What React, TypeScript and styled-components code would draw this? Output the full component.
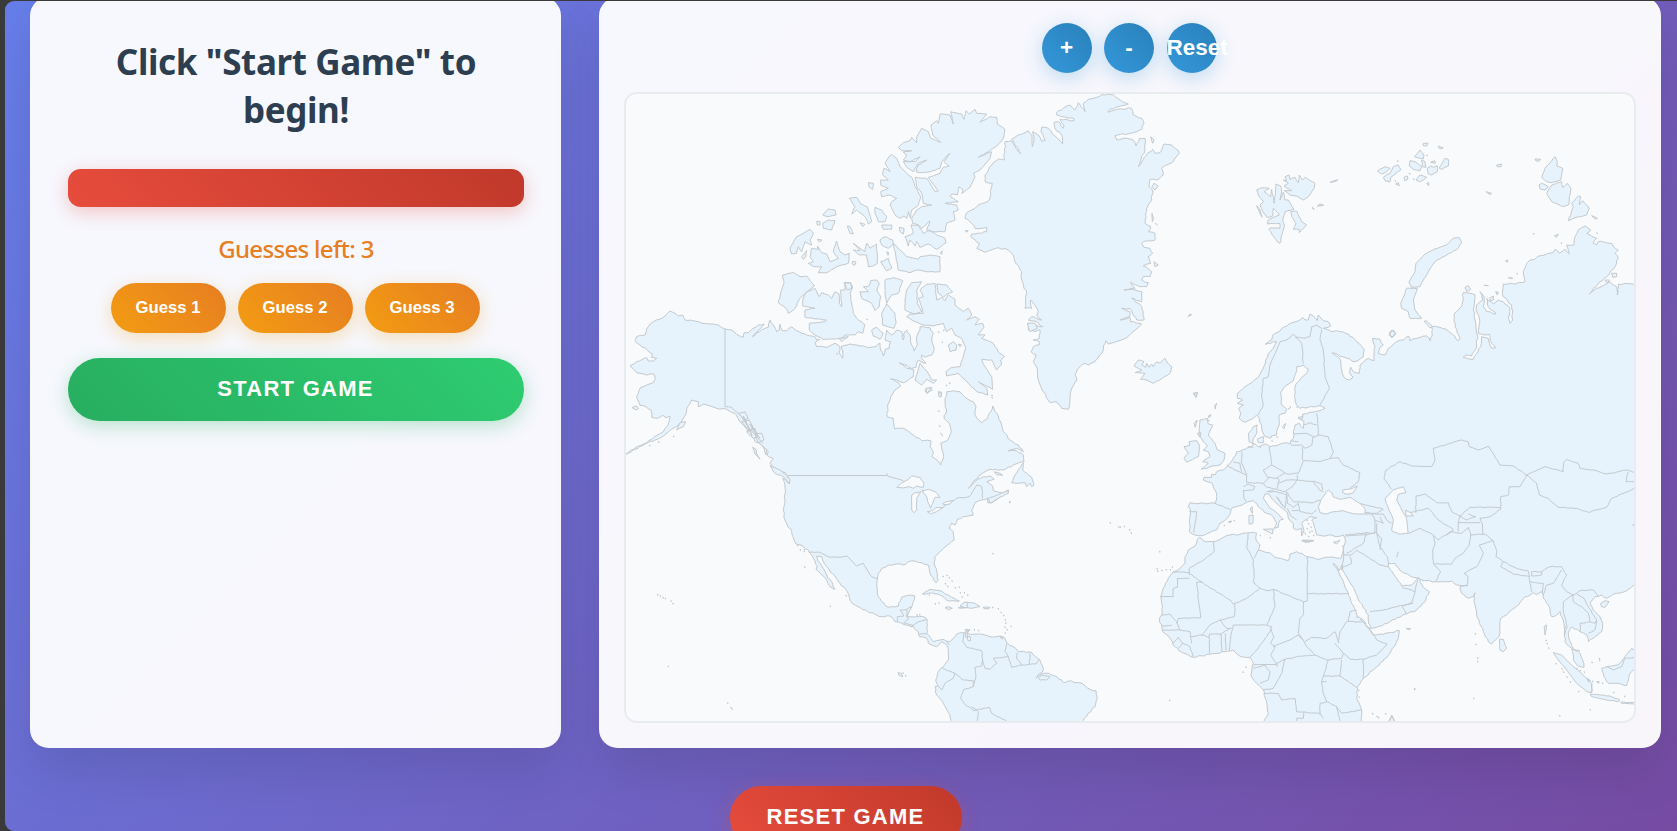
import React from "react";
import styled, { createGlobalStyle } from "styled-components";

const GlobalStyle = createGlobalStyle`
  * { box-sizing: border-box; }
  html, body { margin: 0; padding: 0; height: 100%; overflow: hidden; background: #3a3a3a; }
`;

/* ---------- map data ---------- */

// Survey sheets: each has its own origin and is plotted at three units per pixel.
type Sheet = [number, number];
const canada: Sheet = [620, 280];
const arctic: Sheet = [760, 90];
const carib: Sheet = [760, 460];
const europe: Sheet = [1120, 290];
const siberia: Sheet = [1360, 90];
const africa: Sheet = [1150, 500];
const asia: Sheet = [1380, 420];
const svalbard: Sheet = [1240, 160];

const plot = ([ox, oy]: Sheet, points: string): [number, number][] =>
  points
    .trim()
    .split(/\s+/)
    .map((p) => {
      const [x, y] = p.split(",").map(Number);
      return [ox + x / 3, oy + y / 3];
    });

const roughen = (pts: [number, number][], closed: boolean, amount: number) => {
  const out: [number, number][] = [];
  const last = closed ? pts.length : pts.length - 1;
  for (let i = 0; i < last; i++) {
    const [ax, ay] = pts[i];
    const [bx, by] = pts[(i + 1) % pts.length];
    const len = Math.hypot(bx - ax, by - ay);
    out.push([ax, ay]);
    const n = len > 60 ? 0 : Math.floor(len / 2.6);
    for (let k = 1; k < n; k++) {
      const t = k / n;
      const seed = Math.sin(ax * 12.9 + ay * 78.2 + k * 37.7) * 43758.5;
      const j = (seed - Math.floor(seed) - 0.5) * amount;
      out.push([ax + (bx - ax) * t - ((by - ay) / len) * j, ay + (by - ay) * t + ((bx - ax) / len) * j]);
    }
  }
  if (!closed) out.push(pts[pts.length - 1]);
  return out;
};

const toPath = (pts: [number, number][], closed: boolean, amount: number) =>
  "M" + roughen(pts, closed, amount).map(([x, y]) => `${x.toFixed(1)} ${y.toFixed(1)}`).join("L") + (closed ? "Z" : "");

const ring = (...parts: [Sheet, string][]) =>
  toPath(parts.flatMap(([s, p]) => plot(s, p)), true, 1.5);

const shapes = (s: Sheet, list: string) =>
  list.trim().split("|").map((p) => toPath(plot(s, p), true, 0.7)).join("");

const lines = (s: Sheet, list: string) =>
  list.trim().split("|").map((p) => toPath(plot(s, p), false, 0.8)).join("");

const specks = (s: Sheet, list: string) =>
  plot(s, list).map(([x, y]) => `M${x.toFixed(1)} ${y.toFixed(1)}l1 .5l-.6 .5Z`).join("");

const americas = ring(
  [canada, `18,523 48,502 70,492 95,478 112,465 130,455 143,437 150,408 138,413 128,406 112,415 95,412 93,390 78,380 60,376 50,350 62,322 80,315 100,308 106,295 102,282 80,285 50,278 30,257 50,245 80,233 85,243 100,243 110,235 95,232 97,222 80,208 60,195 45,182 50,170 75,165 85,140 100,125 118,118 135,108 150,93 165,100 175,108 188,105 195,120 220,122 245,130 270,132 295,135 315,147 335,150 350,163 370,172 372,158 385,158 395,148 415,135 433,132 420,147 400,165 398,170 425,150 445,142 450,120 460,135 470,155 478,150 480,133 487,152 500,152 515,140 530,152 560,165 585,170 590,180 600,178 585,188 590,200 620,202 645,190 655,195 660,210 657,216 668,235 668,212 663,200 690,192 720,198 745,203 768,200 780,190 782,210 790,228 795,208 808,205 812,185 795,180 800,150 815,165 830,150 845,155 850,180 855,155 860,150 870,165 875,195 882,213 892,195 890,170 900,150 900,140 930,143 940,160 935,175 943,205 935,225 915,232 905,225 905,235 918,250 895,240 888,262 875,265 838,248 860,265 882,270 880,290 865,300 850,308 830,300 812,297 835,308 842,318 825,330 812,350 803,375 802,410 820,415 824,447 850,445 880,465 905,482 932,482 930,500 940,515 935,530 950,540 962,555 968,540 970,520 962,490 985,478 994,455 988,430 972,415 980,390 975,365 980,335 1000,332 1020,335 1035,352 1060,365 1068,380 1065,405 1085,428 1100,418 1112,395 1118,378 1130,400 1145,435 1150,455 1170,480 1195,495 1210,515 1190,505 1165,513 1190,512 1210,525 1212,545 1180,555 1150,570 1110,568 1090,578 1065,600 1045,625 1065,605 1090,590 1110,588 1122,598 1100,605 1118,618 1120,632 1150,640 1165,630 1165,638 1140,650 1115,668 1103,668 1103,655 1085,660 1065,668 1055,690 1060,705 1030,710 1012,718 1005,735`],
  [carib, `575,190 568,205 580,215 583,240 570,250 545,270 525,290 522,310 530,335 535,360 528,368 512,345 505,315 485,308 465,303 445,305 430,315 410,312 385,315 365,325 355,340 350,370 352,400 365,425 385,442 415,438 425,412 450,405 465,408 458,430 450,450 442,470 470,470 495,472 502,480 500,520 520,545 550,538 570,545 575,540 590,522 610,518 628,510 622,520 640,523 655,522 690,530 720,528 735,535 740,548 760,560 775,575 815,577 840,600 850,630 828,655 845,642 865,640 875,645 905,660 910,668 925,663 960,668 990,688 1008,692 1012,715 1005,740 985,760 970,782 970,800 578,790 570,765 550,730 530,705 525,680 535,678 527,660 535,635 550,620 565,600 565,565 560,555 545,545 530,560 505,550 500,535 478,530 475,515 460,500 430,493 405,485 390,468 365,470 330,458 295,440 272,425 262,395 240,370 225,348 210,335 190,305 185,290 170,288 175,305 190,325 200,345 215,365 225,388 210,380 200,360 180,340 168,328 172,318 160,295 145,270 130,260 108,252 95,215 75,180 70,150 75,120 75,85 68,55 88,70`],
  [canada, `505,587 495,578 470,570 450,550 460,535 440,525 445,515 425,495 405,485 400,470 385,455 365,430 345,400 320,388 290,385 270,378 250,372 235,380 235,365 215,360 200,385 198,402 180,430 160,445 130,468 105,480 75,492`]
);

const eurasiaAfrica = ring(
  [europe, `625,95 610,92 595,75 592,92 580,78 570,72 565,90 555,90 548,82 535,92 515,98 500,108 490,112 478,125 458,135 455,150 435,163 470,155 460,175 445,190 437,210 430,235 415,262 395,278 375,290 352,310 352,325 368,330 352,340 370,345 356,355 362,370 358,385 375,397 395,388 410,375 418,385 425,415 435,440 452,445 455,437 470,435 473,415 478,395 478,375 495,370 500,358 485,345 482,315 487,300 500,285 520,272 527,250 530,230 550,225 565,238 562,248 545,262 525,290 525,325 530,345 540,355 600,347 615,355 600,362 570,367 548,372 548,382 535,385 552,395 550,415 538,400 525,405 520,425 520,445 510,462 500,458 475,465 450,470 435,462 415,470 405,462 388,455 385,430 400,410 412,405 410,430 400,445 400,462 395,470 375,478 350,485 340,505 325,525 310,540 290,545 285,555 275,552 275,562 252,562 250,570 275,578 285,600 290,620 285,640 240,640 210,638 205,650 212,665 208,695 208,725 225,735 245,737 290,720 300,700 325,680 335,655 350,650 375,640 400,632 415,650 440,670 460,680 470,700 462,715 475,712 480,690 490,688 470,668 450,655 430,625 435,612 447,612 455,625 480,650 500,665 508,690 520,700 520,715 530,720 545,715 545,738 552,722 545,700 555,690 570,680 590,683 575,690 585,715 590,735 610,738 635,735 650,740 670,735 675,745`],
  [africa, `585,115 583,135 578,160 572,175 535,172 500,178 470,170 440,155 420,162 415,182 400,178 375,172 360,158 335,152 325,150 330,135 318,120 320,100 300,98 270,103 240,105 215,115 190,125 160,122 148,112 135,138 115,150 105,170 105,190 85,210 70,215 55,235 40,265 32,290 38,320 35,345 28,360 35,375 38,395 60,415 70,435 100,460 130,472 180,463 225,455 250,450 272,470 300,472 310,490 303,525 320,550 340,570 350,610 355,640 342,663 342,680 635,680 635,630 622,600 622,560 640,535 680,500 720,460 745,415 748,392 700,403 670,405 655,385 640,360 620,345 605,310 590,270 575,235 550,190 560,198 567,212 575,195 578,210 605,255 625,300 655,345 660,385 680,382 720,365 765,343 800,330 825,305 838,275 820,262 805,232 785,255 755,258 740,235 720,208 715,190 735,190 755,215 790,232`],
  [asia, `115,475 125,480 165,485 215,483 230,495 262,497 240,500 245,520 265,535 280,530 285,518 282,545 290,585 310,635 325,665 335,672 352,655 360,640 362,595 385,580 420,548 435,530 450,525 460,518 470,524 485,515 490,535 505,555 515,590 530,585 540,575 552,610 555,640 555,665 575,685 580,720 595,738 612,742 608,720 600,700 580,685 568,660 565,640 575,620 600,635 620,645 625,665 640,655 665,635 668,610 660,590 640,570 630,550 645,530 665,525 680,535 710,520 740,512 762,495 790,490`],
  [siberia, `850,580 820,583 795,580 775,583 772,615 770,590 750,575 710,595 688,612 700,595 740,560 765,530 775,505 765,490 775,480 765,475 755,460 715,455 710,465 700,460 710,445 690,435 680,430 692,420 675,408 655,420 645,440 642,465 620,465 628,492 615,478 598,490 585,478 580,488 560,492 530,502 500,520 490,545 495,575 470,580 430,582 428,600 430,620 455,645 458,690 450,700 445,685 450,655 430,635 415,630 400,642 380,625 385,650 408,672 380,665 370,650 372,620 360,605 368,630 350,645 348,660 358,685 355,730 375,735 388,733 395,760 408,773 395,775 385,745 365,740 362,770 340,808 310,802 315,796 335,798 350,770 352,735 345,690 340,660 345,615 310,608 305,650 283,670 285,710 300,745 295,752 265,722 240,712 215,710 217,735 210,752 200,738 170,745 150,753 145,738 130,750 110,755 85,775 75,795 55,790 60,772 70,765 60,748 38,745 45,770 42,812 25,805 0,825`],
  [europe, `718,250 700,245 692,232 690,252 700,262 688,270 672,262 665,240 662,210 636,188 680,205 705,215 730,200 733,180 710,155 685,132 650,122 635,125 610,115 625,112 632,108`]
);

const greenland = ring([arctic, `735,155 755,152 768,175 782,192 775,175 755,148 775,135 805,122 815,135 817,170 822,150 818,125 835,135 845,153 856,152 843,125 845,112 865,115 885,138 908,162 905,135 885,115 882,97 895,95 910,115 912,105 900,87 942,92 942,86 905,80 890,75 890,68 910,55 930,45 945,60 955,38 975,65 970,40 985,28 1010,22 1025,14 1060,14 1080,30 1105,42 1075,50 1045,62 1045,67 1085,57 1115,55 1120,75 1145,85 1152,100 1145,118 1120,128 1065,137 1070,150 1100,145 1120,150 1128,168 1138,145 1155,145 1155,180 1135,230 1160,195 1178,178 1185,190 1200,188 1212,162 1235,165 1258,187 1240,215 1205,235 1210,255 1190,270 1170,268 1167,290 1178,300 1175,330 1160,355 1155,400 1172,410 1165,425 1185,430 1185,450 1150,455 1145,460 1152,472 1170,475 1178,490 1165,500 1172,520 1150,527 1175,545 1170,560 1150,560 1145,570 1165,578 1160,590 1140,590 1112,576 1125,595 1092,600 1125,600 1145,605 1145,635 1115,625 1145,650 1152,690 1130,690 1110,655 1085,655 1110,665 1110,678 1080,690 1110,682 1112,695 1145,702 1125,720 1100,743 1045,762 1038,752 1025,790 1005,815 985,825 975,820 960,830 945,855 950,870 932,905 925,958 905,955 890,935 870,938 850,905 835,870 832,835 820,815 828,795 813,785 820,770 838,765 838,755 820,750 838,745 840,720 825,725 805,720 803,700 830,707 848,710 830,695 805,690 815,680 845,690 830,678 835,665 812,630 815,655 795,655 800,610 785,570 785,545 765,515 760,495 745,480 715,473 675,487 650,475 658,460 632,440 635,432 665,430 672,425 680,425 680,412 645,415 635,400 615,385 620,368 650,350 688,330 697,280 675,275 675,255 695,225 715,207 733,210`]);

const arcticIsles = shapes(arctic, `415,172 430,158 450,152 455,142 470,158 470,140 485,115 505,125 512,145 542,157 518,135 513,105 530,92 535,100 540,72 570,75 580,102 572,65 605,72 612,88 618,62 628,72 645,58 650,70 680,72 660,97 690,80 710,82 712,102 735,118 730,145 710,168 685,185 655,202 695,185 690,205 660,240 640,250 645,260 630,292 605,310 610,300 597,290 592,315 575,312 570,320 595,335 555,340 590,345 595,360 580,365 585,390 560,400 555,425 520,425 500,420 510,393 485,415 475,405 458,400 455,385 470,360 485,350 515,345 490,340 485,310 470,290 465,262 500,265 525,305 535,303 505,262 540,250 550,232 568,228 552,215 570,190 545,215 540,235 510,245 480,248 468,245 475,225 500,210 475,220 460,245 440,232 430,215 465,215 480,200 450,215 430,210 440,195 430,187 455,182 425,182
|387,200 395,193 410,205 420,230 440,250 455,262 465,290 482,320 475,345 455,360 452,385 445,365 440,385 432,378 420,385 405,375 390,345 395,335 410,325 388,315 365,320 362,305 385,295 362,285 362,270 385,270 368,255 372,235 390,245 375,220
|435,440 460,430 453,405 475,405 490,430 508,420 530,435 555,445 558,458 530,478 505,462 480,472 470,455 465,468 450,450 445,468 440,450
|400,460 440,500 475,508 480,500 510,495 540,500 540,545 500,545 470,540 450,548 415,540 408,500
|360,450 375,440 398,450 400,462 385,475 365,465
|320,460 330,475 350,462 352,520 340,528 325,530 320,495 298,495 280,480 300,482 280,460 300,475 315,485
|362,515 385,505 395,535 380,542
|268,325 290,322 300,340 322,350 335,395 325,402 315,380 290,360 275,372 285,350
|345,352 365,360 380,380 375,395 355,395 345,370
|188,375 205,357 225,360 228,375 205,380
|188,400 205,390 225,392 215,420 190,415
|90,475 110,440 130,430 150,418 160,430 150,450 155,465 135,455 125,485 115,470 110,490 95,492
|145,520 160,515 150,500 155,475 175,478 172,468 185,488 200,492 210,515 235,505 220,485 230,453 240,485 255,495 268,490 265,520 230,530 200,548 175,548 185,530 160,530
|262,408 270,410 280,432 270,430|365,405 395,405 395,418 370,418|418,412 432,415 430,432 420,425
|325,278 340,280 338,298 328,292|125,500 140,482 138,498 130,508|170,393 180,395 180,405 172,405
|172,448 186,450 178,456|278,514 288,516 284,526 276,522|300,398 315,403 308,410|380,485 386,488 384,496
|68,555 100,547 120,560 140,558 163,588 130,615 120,625 105,655 85,670 78,655 55,638 65,600 72,580
|140,605 165,595 178,620 185,608 205,615 215,625 225,605 237,612 238,640 245,650 242,600 255,600 255,578 270,578 278,590 270,610 280,670 290,685 315,705 308,730 295,725 285,735 255,735 245,745 190,748 165,735 148,720 148,700 195,695 200,690 135,682 135,660 165,655 128,648 128,630
|300,605 325,605 310,590 325,590 332,572 350,570 358,580 350,600 362,620 358,650 345,662 335,640 305,625
|375,570 400,563 428,572 415,610 395,615 380,640 375,610
|380,642 405,670 408,700 402,715 390,712 368,705 365,670
|440,600 455,578 485,575 470,600 472,640 485,665 465,672 435,660 435,630
|480,600 500,583 525,580 530,630 545,622 555,632 565,615 585,628 585,645 610,665 625,655 635,675 620,690 645,680 658,688 645,705 668,700 672,712 655,735 675,735 665,745 700,760 715,785 733,800 722,810 725,822 710,840 695,810 665,808 675,830 695,860 698,898 655,875 680,895 683,915 650,905 620,875 595,850 560,858 558,845 575,832 600,830 610,800 617,775 605,745 585,735 575,715 560,725 550,700 520,708 490,705 465,695 440,680 450,672 490,670 485,650 475,625 490,620
|530,582 560,585 578,605 560,613 550,622 535,610
|465,870 480,820 505,850 515,870 530,870 520,880 500,868 485,885|495,900 510,893 517,900 500,910
|535,905 545,908 542,920|565,765 580,755 590,765 588,780 570,785|595,762 605,765 600,770
|335,720 350,712 370,730 360,748 340,738|237,745 265,740 245,755|803,700 825,700 832,715 810,725
|1172,140 1182,150 1178,160|1182,280 1195,288 1185,300 1176,290|1176,370 1181,385 1177,395|1186,400 1192,405|1182,515 1195,525 1185,530
|1122,828 1135,810 1152,815 1145,825 1157,832 1160,820 1167,832 1175,822 1180,830 1190,815 1200,820 1215,805 1220,815 1235,830 1230,850 1200,870 1180,880 1160,870 1142,868 1155,850 1125,848 1145,840
|1284,680 1290,672 1295,674|1300,910 1312,908 1308,922|541,490 547,483 545,493|252,578 272,578 275,595 262,600|615,422 625,422 620,427`);

const americanIsles =
  shapes(carib, `755,68 765,45 785,15 790,8 788,30 800,40 815,52 822,75 815,80 810,70 800,80 795,68 775,70
|703,35 720,40 728,46 710,44|684,115 700,110 745,92 745,100 705,120 690,130
|487,402 510,388 540,392 575,412 598,423 565,423 545,407 515,398 495,403|595,443 615,443 600,438 612,427 640,428 660,440 635,445 622,443
|555,443 565,440 577,445 565,449|670,441 690,442 687,446 672,446|414,638 424,640 428,650 416,645|616,508 630,510 618,514|720,532 730,530 728,537
|835,655 845,645 870,650 860,660 840,660`) +
  shapes(canada, `450,557 480,570 510,598 508,612 490,590 465,580|398,502 408,508 410,522 420,538 405,522|170,450 180,428 197,425 190,440
|36,383 48,378 56,385 48,390|355,400 375,395 385,415 372,420|365,425 388,420 400,445 385,450|380,455 405,445 412,470 400,475|405,460 425,460 432,480 415,488|430,500 440,510 438,525|370,408 380,430 392,455 396,470|390,432 402,455 420,475|955,340 962,335 964,350 957,350|917,325 935,322 922,340`);

const oldWorldIsles =
  shapes(svalbard, `50,90 65,83 88,85 72,95 92,110 95,88 103,130 108,72 122,78 125,95 120,120 130,97 135,120 145,120 150,128 162,148 135,155 128,180 133,195 120,250 112,245 86,208 92,203 120,205 120,190 82,192 85,180 118,165 100,145 98,168 80,172 68,155 60,135 70,125 55,105
|130,60 140,62 135,50 147,45 150,58 165,52 175,68 178,45 188,60 195,52 225,70 222,85 205,110 190,120 170,108 150,105 133,92 155,92 132,78 145,70
|153,155 170,153 178,170 185,185 200,195 190,205 178,218 178,208 160,208 168,190 155,170|50,137 60,150 66,172|270,67 293,59 290,63|217,142 223,148 219,147|232,138 240,132 251,136 240,138`) +
  shapes(europe, `240,390 262,385 265,402 278,405 265,435 285,460 292,480 315,490 312,510 300,525 280,527 260,535 243,538 265,520 248,515 270,500 265,485 250,480 262,468 250,455 240,440 238,415
|192,470 210,465 207,455 230,452 238,465 235,500 200,517 192,505 205,490|430,718 460,717 457,732|387,677 400,675 398,700 388,703|390,657 397,650 397,670
|550,750 582,752 565,756|640,757 660,750 650,762|412,447 430,440 430,458 415,458|487,410 497,400 492,416|222,310 232,308 228,322|284,347 290,340 286,357|222,400 232,390 226,412|232,430 242,428 240,442|325,695 335,693 330,699|535,382 548,380 545,390|808,128 820,120 827,130 815,143|265,378 273,374 268,384`) +
  shapes(siberia, `140,595 172,595 160,630 165,660 185,685 150,685 145,665 125,655 122,640
|147,578 165,545 168,520 195,492 225,477 260,465 280,445 298,443 305,458 295,475 260,495 225,515 205,545 190,570 180,590 155,592
|95,720 107,732 98,742 87,735|545,262 555,235 585,200 592,215 590,228 608,235 602,270 575,278 560,275
|560,310 575,285 605,275 608,292 622,280 633,295 625,345 610,350 575,335|537,285 545,280 565,290 555,300 540,297
|625,392 640,350 635,340 655,318 662,320 658,345 668,332 688,355 680,375 645,383|52,243 75,230 90,235 80,245 65,252
|70,262 90,250 100,230 115,225 122,240 105,252 92,262 90,276 75,272|150,212 165,215 185,230 180,242 160,238 148,228|163,200 180,180 192,195 190,207
|185,210 195,215 198,232 187,230|202,235 212,228 220,232 232,227 232,245 215,255 205,252|238,235 255,205 265,208 265,228 245,238|168,270 180,255 200,262 190,270 178,275
|190,160 204,160 200,168 190,167|234,168 250,173 240,177|132,262 142,258 144,268 134,272|107,282 115,278 118,287|212,217 224,212 226,220|200,280 206,278 206,287|410,225 425,222 423,230 412,230
|378,305 395,310 390,314|525,207 542,208 538,213 528,213|583,437 595,433 590,442|695,377 712,385 706,388|437,512 444,510 441,517|315,592 325,587 332,598 320,605|193,693 200,693 217,710 210,714|388,625 400,618 400,630 392,632|407,605 415,607 412,615|755,550 770,550 770,560 758,562|735,570 748,570 742,580|445,563 458,565|372,586 385,587`) +
  shapes(asia, `358,658 370,658 380,685 370,695 360,690|520,698 545,705 575,735 600,755 620,775 635,790 635,818 620,815 590,790 560,750 535,720
|630,822 660,825 690,828 720,840 715,845 680,840 635,830|665,745 680,740 715,735 735,710 755,685 775,700 775,735 750,760 740,797 715,790 685,790 672,770|662,550 675,542 687,545 675,562 664,560
|78,625 92,626 86,629|22,915 35,886 48,915|758,315 775,310 775,325|722,846 765,848 765,852 725,850|650,785 658,785 655,790|492,620 500,615 495,645|622,775 632,782 625,785`) +
  shapes(africa, `712,670 725,647 738,670|455,122 485,124 468,127`);

const scatter =
  specks(carib, `112,255 120,268 132,268 132,273 133,320 210,437 257,406 428,638 436,646 698,280 1050,187 1075,200 748,125 548,348 560,345 567,352 555,370 562,378 575,362 585,382 597,380 600,397 605,410 612,397 622,404 697,441 714,445 722,456 730,465 735,478 736,488 734,500 740,508 752,498 642,508 655,510 525,430 536,428 507,404 470,464 478,463 735,518`) +
  specks(canada, `88,495 115,485 160,468 1168,665 958,437 955,392 962,460 966,465 970,150 966,185 955,155 1115,345 1115,352 978,315 988,308 650,220 740,117`) +
  specks(europe, `0,710 12,708 28,718 33,728 312,705 342,690 420,735 450,742 510,350 505,355 530,350 560,690 565,700 572,710 560,715 568,725 555,730 580,735 565,738 550,725 575,722 265,390 455,452 420,470 470,440`) +
  specks(africa, `28,154 20,205 22,212 35,210 48,208 60,208 66,200 278,515 287,500 58,600 793,566 667,640 680,648 685,652 706,640 625,570 626,590 620,350 632,358 645,368`) +
  specks(asia, `285,640 287,672 292,713 292,723 103,806 280,834 595,813 630,868 538,886 497,660 500,670 505,683 657,715 658,720 635,726 637,783 667,788 700,816 733,828 527,730 545,745 550,755 560,770 570,785 590,745 600,750 612,755 555,620 553,635`) +
  specks(siberia, `112,212 148,250 105,272 160,266 520,430 603,458 710,428 470,550 200,195`) +
  specks([640, 580], `52,43 60,47 68,52 75,54 92,62 98,70 84,258 262,368 272,382 275,386`);

const lakes =
  shapes(carib, `410,82 425,68 445,58 455,48 480,52 492,70 490,82 470,78 460,85 445,80 430,84|455,105 465,98 483,95 470,115 470,150 462,158 455,150
|487,93 505,88 525,95 540,112 525,112 518,130 512,145 503,125 500,110|502,155 520,150 528,143 548,143 530,155 512,162|548,130 560,125 578,122 570,132 550,134|622,530 630,530 632,542 624,542|615,520 622,520 622,532 618,532`) +
  shapes(europe, `595,650 605,625 625,600 635,608 640,620 662,628 690,622 720,640 735,655 735,672 700,672 670,662 640,665 615,672 600,668
|668,600 690,597 712,588 700,608 680,613 668,608|795,625 820,600 850,590 858,608 835,613 830,630 845,660 858,680 862,705 865,730 840,733 815,722 820,690 805,655|857,660 872,668 880,678 858,678`);

const borders =
  lines(canada, `905,630 940,635|965,685 1010,655 1048,650 1070,615 1085,620 1088,655|800,580 805,590 850,602|315,380 335,382 365,410 385,440 400,460 430,490`) +
  lines(carib, `147,277 175,276 210,292 240,292 260,288 290,318 310,310 335,350 352,355|412,485 412,470 432,468 420,450 440,448 440,470|440,448 455,440|430,490 445,478 440,468|455,498 470,488 500,478|478,522 500,522|432,488 462,497|560,545 568,555
|612,520 608,545 620,562 665,572 668,600 665,618 645,622 648,650 640,680|668,600 675,625 690,628 710,610 700,595 745,590 735,575 740,550|745,590 755,622 785,615 770,595 772,578|785,615 808,613 810,580|808,613 828,612 838,598
|548,625 585,640 580,655 555,670 545,690 535,678|585,640 610,660 640,662 640,680 610,690 602,715 620,738 635,745 640,752 688,742 695,760 742,785|635,740 655,755 652,788|622,428 622,443`) +
  lines(europe, `415,375 430,345 425,320 430,265 445,260 450,225 470,180 480,155 500,150 520,132|520,132 545,160 550,220|525,140 555,145 570,140 575,110 590,105 605,115|605,118 600,150 610,180 615,260 628,295 600,345|590,370 593,400 595,435|550,405 570,398 590,405|522,432 560,430 580,440|580,440 575,465 555,475 545,465 512,465|512,452 535,455|595,435 580,442
|595,435 625,440 640,485 630,505|550,512 600,515 630,505|630,505 655,503 670,525 720,548 715,575 690,595|548,470 548,510|550,512 535,550|448,470 455,525|455,525 490,545 500,552 535,550|365,485 365,520 380,555 380,578 430,580 445,565 430,540 455,525|445,562 470,565 495,548
|430,580 440,592 470,598 478,570 470,562|370,590 385,582 405,590 400,600 372,602|370,600 372,625 378,635|320,525 345,540 380,555|340,515 360,520 365,545|285,640 330,658|208,665 230,665 225,700 222,728|475,580 500,570 532,570|532,555 532,570 515,592 495,605 472,600|532,570 580,575 598,600 610,605|498,605 520,635 580,638 600,630|580,572 605,582 608,600
|500,605 502,640 520,652 535,640|535,640 540,665 575,672 590,660|445,605 470,605 500,615 495,655 470,620 490,650|440,605 460,600|502,655 515,680 530,690|515,662 540,660|735,672 755,672 765,690 765,728 740,735 675,738|720,640 760,650 790,658 770,670 735,668|755,672 790,672 800,690 815,700|765,690 790,700 780,680|765,725 785,745 780,780|385,470 400,472`) +
  lines(africa, `585,105 650,98 675,100|680,70 680,100|650,98 640,130 590,160|580,165 605,165 620,150|620,150 690,195 715,200|680,100 690,140 712,170 715,190|660,335 700,330 730,322 790,310|757,262 795,275 803,240|795,275 785,308 757,318 768,342|575,210 580,200 605,190 600,170|578,135 582,165 575,210
|190,125 192,155 160,180 118,205 118,225|70,217 118,217|118,235 82,235 82,262 70,265 70,290 32,290|118,220 160,250 240,300 250,313|158,247 140,247 152,353 85,355 80,370|255,313 253,350 210,360 180,375 155,405|250,313 290,295 330,265 312,250 310,180 290,140 295,100|325,150 312,175|330,265 350,272 370,268 460,305|472,170 472,303 460,305|472,281 595,281
|460,305 460,345 450,355 445,400 460,420|370,268 375,320 350,375|350,375 300,375 250,375 245,395 238,450|225,400 228,450|213,402 215,455|178,402 178,460|178,402 213,402 240,385|120,410 155,405 178,412|35,345 60,342 80,365 90,390 35,390|35,378 65,376|90,390 120,395 125,430|70,430 85,412 98,430 85,445|98,430 120,440 130,470|210,360 230,385 245,385
|300,472 320,450 360,395 365,380 350,375|360,385 372,410 362,430 375,440 362,465 380,493 310,495|370,440 420,420 445,405 460,420 470,440 495,465 440,470 405,478 380,490|465,425 485,412 530,415 555,395 565,425|495,465 530,480 575,475 580,460 555,430|565,430 570,395 590,365 640,365 665,395 680,420 712,433 680,465 640,478 600,478 580,460|595,365 600,335 620,330|640,478 640,535|535,480 520,528 570,528 575,480|570,528 620,562
|405,478 395,520 370,565 340,570|310,505 330,500 345,495 360,515 355,540 330,550|380,490 382,500|340,580 385,580 395,600 435,595 440,635 510,640 520,655|520,528 515,545 520,580 530,605 510,610 510,645|515,545 530,545|530,605 560,620 575,640 635,630|560,620 572,668|440,670 440,655 460,655 462,635`) +
  lines(asia, `87,340 120,325 160,345|160,345 165,370 158,390 160,430 182,455 168,483|160,345 175,360 210,335 245,340 265,322 272,345 315,342|162,432 215,432 225,415 250,400 268,375 272,345|262,497 265,470 252,460 290,440 310,400 298,375 340,362|315,342 340,362 350,395 348,410 370,425 410,445 445,453 448,470 400,462 362,440 370,425|455,455 485,455 485,465 455,468 455,455|485,455 510,440 545,440 560,465 545,495 560,515 580,525|448,470 450,490 455,515|450,485 490,490 487,520|545,450 520,490 500,495 490,525
|580,525 550,545 550,575 562,620 552,645|580,525 600,512 640,510 655,530|580,525 580,545 605,560 625,580 630,605 600,610 600,635|590,522 612,535 625,560 650,600 645,610 630,605|650,600 645,630 625,640|35,208 12,175 18,150 60,125 95,138 155,140 165,120 160,85 245,60 265,65 268,80 295,90 325,78 360,135 400,138 440,165|440,165 420,200 388,200 385,225 362,230 362,268|108,278 108,228 135,222 170,248 205,248 215,275 240,288 270,262 362,262
|362,268 330,290 300,295 308,315 308,342|88,278 145,265 175,300 220,328 215,335 200,345|240,288 235,310 235,335|240,288 260,300 288,290 265,282|235,308 300,308|440,165 495,140 550,155 550,130 560,118 595,130 600,145 640,150 680,162 740,150 775,160|440,165 470,190 478,225 505,235 535,262 590,265 625,277 680,262 695,235 765,205 775,203|745,155 738,185 770,187|575,688 600,692|680,740 700,750 725,740 735,715 765,712|50,412 55,395|635,790 635,818`);

// Surveyed straight boundaries along meridians and parallels.
const straight = "M725 329V406.7M788.5 475.5H886.7";

/* ---------- styled parts ---------- */

const Backdrop = styled.div`
  height: 831px;
  padding: 1px 0 0 5px;
  background: #3a3a3a;
  overflow: hidden;
`;

const Page = styled.main`
  width: 1690px;
  height: 830px;
  padding: 0 33px 0 25px;
  overflow: hidden;
  border-radius: 9px;
  background: linear-gradient(135deg, #667eea 0%, #764ba2 100%);
  font-family: "Segoe UI", "Noto Sans", sans-serif;
`;

const Columns = styled.div`
  display: grid;
  grid-template-columns: 531px 1062px;
  column-gap: 38px;
  height: 751px;
  margin-top: -4px;
`;

const Card = styled.section<{ $pad: string }>`
  display: flex;
  flex-direction: column;
  padding: ${(p) => p.$pad};
  border-radius: 18.75px;
  background: rgba(255, 255, 255, 0.95);
  box-shadow: 0 25px 50px rgba(0, 0, 0, 0.1);
`;

const Title = styled.h1`
  margin: 0 0 35px;
  color: #2c3e50;
  font-size: 35px;
  font-weight: 700;
  letter-spacing: -0.38px;
  line-height: 48px;
  text-align: center;
`;

const Clue = styled.div`
  height: 38px;
  flex: none;
  border-radius: 12.5px;
  background: linear-gradient(45deg, #e74c3c, #c0392b);
  box-shadow: 0 5px 19px rgba(231, 76, 60, 0.3);
`;

const GuessesLeft = styled.p`
  margin: 25px 0 17px;
  color: #e67e22;
  font-size: 24px;
  font-weight: 500;
  letter-spacing: -0.68px;
  line-height: 34px;
  text-align: center;
`;

const GuessRow = styled.div`
  display: flex;
  justify-content: center;
  gap: 12px;
  margin: 0 2px 25px 0;
`;

const Button = styled.button`
  display: block;
  padding: 0;
  border: 0;
  color: #fff;
  font-family: Arial, "Liberation Sans", sans-serif;
  font-weight: 700;
  white-space: nowrap;
`;

const GuessButton = styled(Button)`
  width: 115px;
  height: 50px;
  padding-bottom: 1px;
  border-radius: 25px;
  background: linear-gradient(45deg, #f39c12, #e67e22);
  box-shadow: 0 5px 19px rgba(243, 156, 18, 0.3);
  font-size: 16.67px;
`;

const ActionButton = styled(Button)<{ $tone: "start" | "reset" }>`
  width: ${(p) => (p.$tone === "start" ? "456px" : "232.5px")};
  height: 63px;
  padding: 0 1px 2px 0;
  flex: none;
  border-radius: 31.25px;
  background: ${(p) =>
    p.$tone === "start" ? "linear-gradient(45deg, #27ae60, #2ecc71)" : "linear-gradient(45deg, #e74c3c, #c0392b)"};
  box-shadow: 0 5px 19px ${(p) => (p.$tone === "start" ? "rgba(39, 174, 96, 0.3)" : "rgba(231, 76, 60, 0.3)")};
  font-size: 22px;
  letter-spacing: 1.25px;
`;

const ZoomRow = styled.div`
  display: flex;
  justify-content: center;
  gap: 12.5px;
  margin: 0 2px 19px 0;
`;

const ZoomButton = styled(Button)`
  width: 50px;
  height: 50px;
  border-radius: 50%;
  background: linear-gradient(45deg, #3498db, #2980b9);
  box-shadow: 0 5px 19px rgba(52, 152, 219, 0.3);
  font-size: 22.5px;
`;

const MapFrame = styled.div`
  width: 1012px;
  height: 631px;
  overflow: hidden;
  border: 2px solid #e9ecef;
  border-radius: 12.5px;
  background: #f8fafc;
`;

const WorldMap = styled.svg`
  display: block;
  width: 1008px;
  height: 627px;

  path {
    fill: #e6f3fd;
    stroke: #c3c9cd;
    stroke-width: 1;
    stroke-linejoin: round;
  }
  path.water { fill: #f8fafc; }
  path.border { fill: none; }
`;

const Footer = styled.footer`
  display: flex;
  justify-content: center;
  margin-top: 38px;
`;

export default function App() {
  return (
    <>
      <GlobalStyle />
      <Backdrop>
        <Page>
          <Columns>
            <Card $pad="41px 37px 37px 38px">
              <Title>Click "Start Game" to begin!</Title>
              <Clue />
              <GuessesLeft>Guesses left: 3</GuessesLeft>
              <GuessRow>
                {[1, 2, 3].map((n) => (
                  <GuessButton key={n}>Guess {n}</GuessButton>
                ))}
              </GuessRow>
              <ActionButton $tone="start">START GAME</ActionButton>
            </Card>
            <Card $pad="26px 25px 25px">
              <ZoomRow>
                <ZoomButton>+</ZoomButton>
                <ZoomButton>-</ZoomButton>
                <ZoomButton>Reset</ZoomButton>
              </ZoomRow>
              <MapFrame>
                <WorldMap viewBox="626 94 1008 627">
                  <path d={americas} />
                  <path d={eurasiaAfrica} />
                  <path d={greenland} />
                  <path d={arcticIsles} />
                  <path d={americanIsles} />
                  <path d={oldWorldIsles} />
                  <path className="border" d={borders} />
                  <path className="border" d={straight} />
                  <path className="water" d={lakes} />
                  <path d={scatter} />
                </WorldMap>
              </MapFrame>
            </Card>
          </Columns>
          <Footer>
            <ActionButton $tone="reset">RESET GAME</ActionButton>
          </Footer>
        </Page>
      </Backdrop>
    </>
  );
}
